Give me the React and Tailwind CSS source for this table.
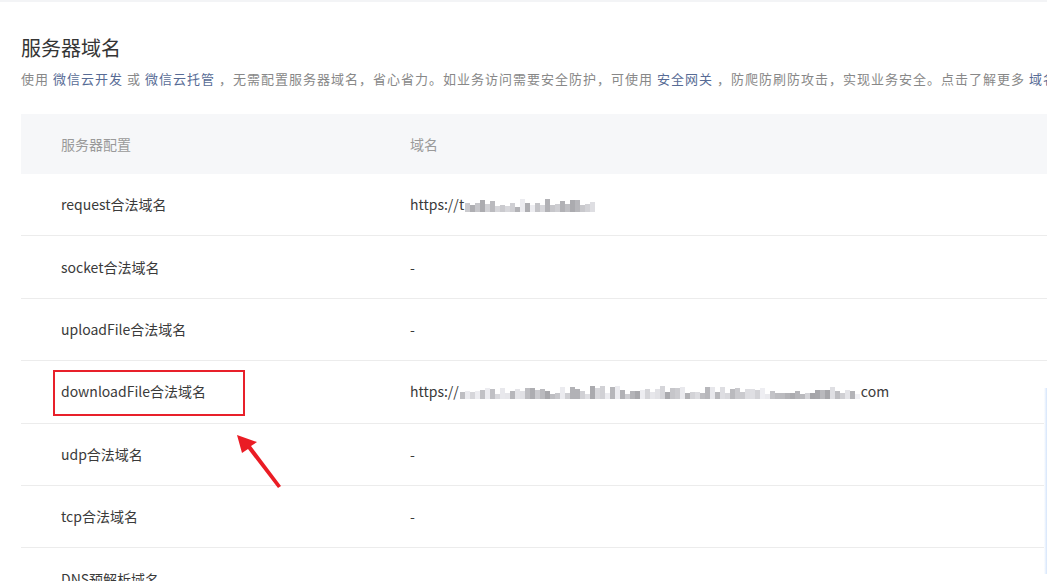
import React from "react";

const FONT = { fontFamily: '"Noto Sans CJK SC", "Microsoft YaHei", "Noto Sans", sans-serif' };

// pixelated stand-in for the mosaic-blurred domain text
function Blur({ width, seed = 1 }) {
  const cells = [];
  let s = seed;
  const n = Math.floor(width / 5);
  for (let i = 0; i < n; i++) {
    s = (s * 9301 + 49297) % 233280;
    const r = s / 233280;
    const shade = Math.round(165 + r * 75);
    s = (s * 9301 + 49297) % 233280;
    const h = 5 + Math.round((s / 233280) * 8);
    cells.push(
      <span
        key={i}
        className="inline-block w-[5px]"
        style={{ height: h, background: `rgb(${shade},${shade},${shade + 4})` }}
      />
    );
  }
  return <span className="inline-flex items-end h-[12px] mx-[1px] translate-y-[1px]">{cells}</span>;
}

const rows = [
  { name: "request合法域名", value: <>https://t<Blur width={130} seed={7} /></> },
  { name: "socket合法域名", value: "-" },
  { name: "uploadFile合法域名", value: "-" },
  { name: "downloadFile合法域名", value: <>https://<Blur width={400} seed={3} />com</>, mark: true },
  { name: "udp合法域名", value: "-" },
  { name: "tcp合法域名", value: "-" },
  { name: "DNS预解析域名", value: "-" },
];

function Link({ children }) {
  return <span className="text-[#576b95] mx-[4px]">{children}</span>;
}

export default function App() {
  return (
    <div className="relative w-[1047px] h-[581px] overflow-hidden bg-white" style={FONT}>
      <div className="h-[2px] bg-[#f3f4f6]" />
      <div className="pl-[21px] pt-[33px]">
        <h2 className="text-[20px] leading-[26px] text-[#353535] font-normal">服务器域名</h2>
        <p className="mt-[8px] text-[13px] leading-[20px] text-[#888] whitespace-nowrap tracking-[1px]">
          使用<Link>微信云开发</Link>或<Link>微信云托管</Link>，无需配置服务器域名，省心省力。如业务访问需要安全防护，可使用<Link>安全网关</Link>，防爬防刷防攻击，实现业务安全。点击了解更多<Link>域名配置详情</Link>
        </p>

        <div className="mt-[25px] text-[14px]">
          <div className="grid grid-cols-[389px_1fr] h-[60px] items-center bg-[#f6f7f9] text-[#9a9a9a]">
            <div className="pl-[40px]">服务器配置</div>
            <div>域名</div>
          </div>
          {rows.map((r) => (
            <div
              key={r.name}
              className="relative grid grid-cols-[389px_1fr] h-[62.4px] items-center border-b border-[#ececec] text-[#3a3a3a]"
            >
              <div className="pl-[40px]">{r.name}</div>
              <div className="flex items-center">{r.value}</div>
              {r.mark && (
                <div className="absolute left-[32px] top-[9px] w-[192px] h-[46px] border-2 border-[#e8202a]" />
              )}
            </div>
          ))}
        </div>
      </div>

      <svg className="absolute left-[230px] top-[428px]" width="60" height="66" viewBox="0 0 60 66">
        <path d="M7 7 L27 14 L21 18 L51 58 L48 60 L18 21 L12 25 Z" fill="#ea1c24" />
      </svg>

      <div className="absolute right-0 top-[388px] w-[3px] h-[186px] bg-gradient-to-r from-white to-[#d5e5fb]" />
    </div>
  );
}
